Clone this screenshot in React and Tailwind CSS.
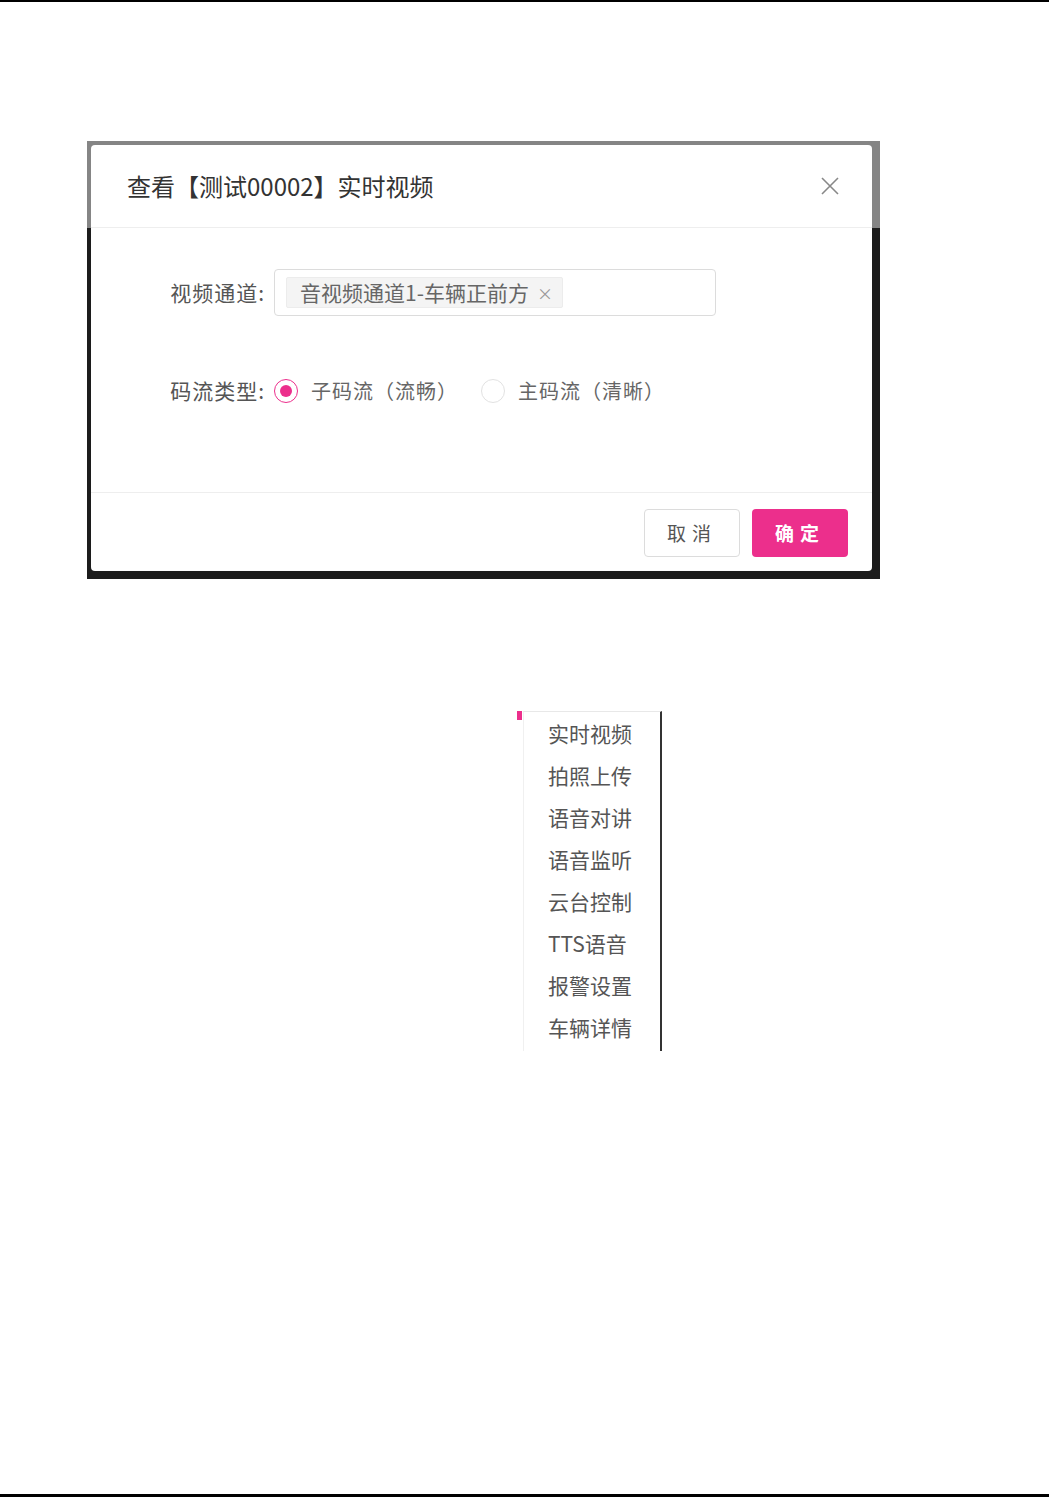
import React from 'react';

const font = { fontFamily: '"Noto Sans CJK SC", "Noto Sans", sans-serif' };

const menuItems = ['实时视频', '拍照上传', '语音对讲', '语音监听', '云台控制', 'TTS语音', '报警设置', '车辆详情'];

const CloseIcon = () => (
  <svg width="20" height="20" viewBox="0 0 20 20" className="text-[#888]">
    <path d="M2 2 L18 18 M18 2 L2 18" stroke="currentColor" strokeWidth="1.6" fill="none" />
  </svg>
);

const Radio = ({ checked }) => (
  <span
    className={`flex h-[24px] w-[24px] items-center justify-center rounded-full border-[1.5px] bg-white ${
      checked ? 'border-[#ec2f8c]' : 'border-[#e2e2e2]'
    }`}
  >
    {checked && <span className="h-[12px] w-[12px] rounded-full bg-[#ec2f8c]" />}
  </span>
);

const Dialog = () => (
  <div className="flex h-[426px] w-[781px] flex-col rounded-[4px] bg-white">
    {/* header */}
    <div className="flex h-[83px] items-center justify-between border-b border-[#eeeeee] pl-[36px] pr-[32px]">
      <span className="text-[24px] text-[#333]">查看【测试00002】实时视频</span>
      <CloseIcon />
    </div>

    {/* body */}
    <div className="flex flex-1 flex-col pt-[41px]">
      <div className="flex items-center">
        <label className="w-[183px] text-right pr-[9px] text-[21px] tracking-[1px] text-[#555]">视频通道:</label>
        <div className="flex h-[47px] w-[442px] items-center rounded-[4px] border border-[#dcdcdc] pl-[11px]">
          <span className="flex h-[31px] items-center gap-[8px] rounded-[2px] border border-[#ececec] bg-[#f4f4f4] pl-[13px] pr-[9px] text-[21px] text-[#666]">
            音视频通道1-车辆正前方
            <span className="text-[16px] text-[#999]">×</span>
          </span>
        </div>
      </div>

      <div className="mt-[59px] flex items-center">
        <label className="w-[183px] text-right pr-[9px] text-[21px] tracking-[1px] text-[#555]">码流类型:</label>
        <div className="flex items-center gap-[13px]">
          <Radio checked />
          <span className="text-[20px] tracking-[1px] text-[#666]">子码流（流畅）</span>
        </div>
        <div className="ml-[23px] flex items-center gap-[13px]">
          <Radio />
          <span className="text-[20px] tracking-[1px] text-[#666]">主码流（清晰）</span>
        </div>
      </div>
    </div>

    {/* footer */}
    <div className="flex h-[79px] items-start justify-end gap-[12px] border-t border-[#eeeeee] pr-[24px] pt-[16px]">
      <button className="h-[48px] w-[96px] rounded-[4px] border border-[#dcdcdc] bg-white text-[19px] tracking-[6px] text-[#555]">
        取消
      </button>
      <button className="h-[48px] w-[96px] rounded-[4px] bg-[#ec2f8c] text-[19px] font-bold tracking-[6px] text-white">
        确定
      </button>
    </div>
  </div>
);

const Menu = () => (
  <div className="ml-[517px] flex w-[145px]">
    <div className="flex w-[6px] flex-col">
      <div className="h-[9px] w-[5px] bg-[#ec2f8c]" />
    </div>
    <div className="flex w-[139px] flex-col border-l border-t border-r-2 border-l-[#f0f0f0] border-t-[#e8e8e8] border-r-[#333] bg-white py-[1px] pb-[2px]">
      {menuItems.map((item) => (
        <div key={item} className="flex h-[42px] items-center pl-[24px] text-[21px] text-[#555]">
          {item}
        </div>
      ))}
    </div>
  </div>
);

export default function App() {
  return (
    <div className="flex h-[1497px] w-[1049px] flex-col bg-white" style={font}>
      <div className="h-[2px] w-full bg-black" />

      <div className="ml-[87px] mt-[139px] h-[438px] w-[793px] bg-[linear-gradient(to_bottom,#858585_87px,#1c1c1c_87px)] pl-[4px] pt-[4px]">
        <Dialog />
      </div>

      <div className="mt-[132px]">
        <Menu />
      </div>

      <div className="flex-1" />
      <div className="h-[3px] w-full bg-black" />
    </div>
  );
}
